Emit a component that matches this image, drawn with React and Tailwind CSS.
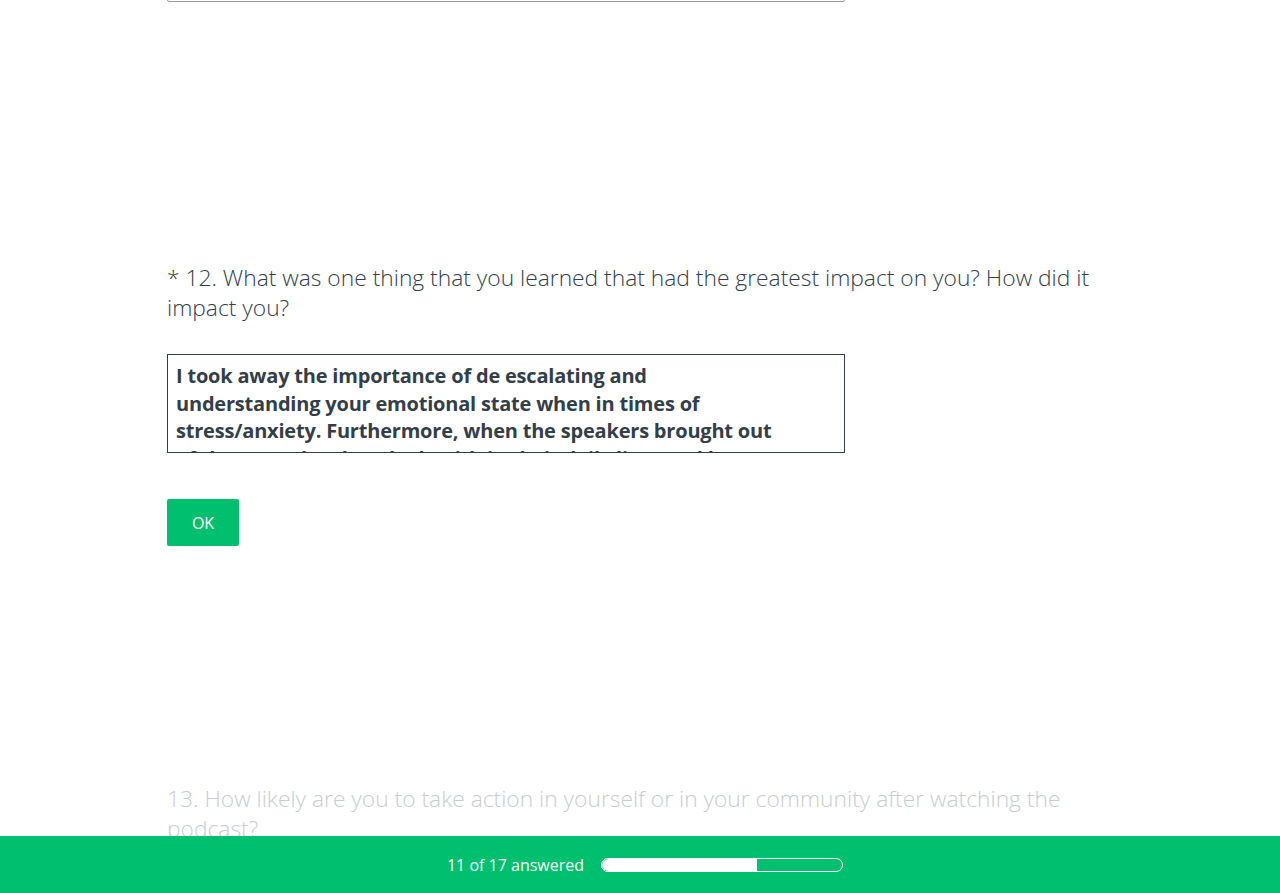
import React from 'react';

const answer =
  'I took away the importance of de escalating and understanding your emotional state when in times of stress/anxiety. Furthermore, when the speakers brought out of the struggles they dealt with in their daily lives and how they overcame it, I realized that I am not alone.';

const App = () => {
  const answered = 11;
  const total = 17;

  return (
    <div className="h-[893px] overflow-hidden bg-white font-['Open_Sans',sans-serif] text-[#333e48]">
      <div className="w-[946px] ml-[167px]">
        <div className="w-[678px] h-[100px] mt-[-98px] border border-[#9b9b9b] rounded-[2px]" />

        <div className="mt-[261px]">
          <h2 className="text-[22.8px] leading-[30px] font-light">
            * 12. What was one thing that you learned that had the greatest impact on you? How did it impact you?
          </h2>
          <div className="mt-[31px] w-[678px] h-[99px] border border-[#333e48] overflow-hidden pl-[8px] pr-[60px] pt-[7px]">
            <p className="text-[20px] leading-[27.5px] font-bold tracking-[-0.2px]">{answer}</p>
          </div>
          <button className="mt-[46px] w-[72px] h-[47px] bg-[#00bf6f] rounded-[2px] text-white text-[16px]">
            OK
          </button>
        </div>

        <div className="mt-[238px]">
          <h2 className="text-[22.8px] leading-[30px] font-light text-[#c9cccf]">
            13. How likely are you to take action in yourself or in your community after watching the podcast?
          </h2>
        </div>
      </div>

      <div className="fixed bottom-0 left-0 right-0 h-[57px] bg-[#00bf6f] flex items-center justify-center gap-[17px] pl-[10px] text-white">
        <span className="text-[16px] leading-none">
          {answered} of {total} answered
        </span>
        <div className="w-[242px] h-[14px] border border-white rounded-full overflow-hidden">
          <div className="h-full bg-white rounded-l-full" style={{ width: `${(answered / total) * 100}%` }} />
        </div>
      </div>
    </div>
  );
};

export default App;
